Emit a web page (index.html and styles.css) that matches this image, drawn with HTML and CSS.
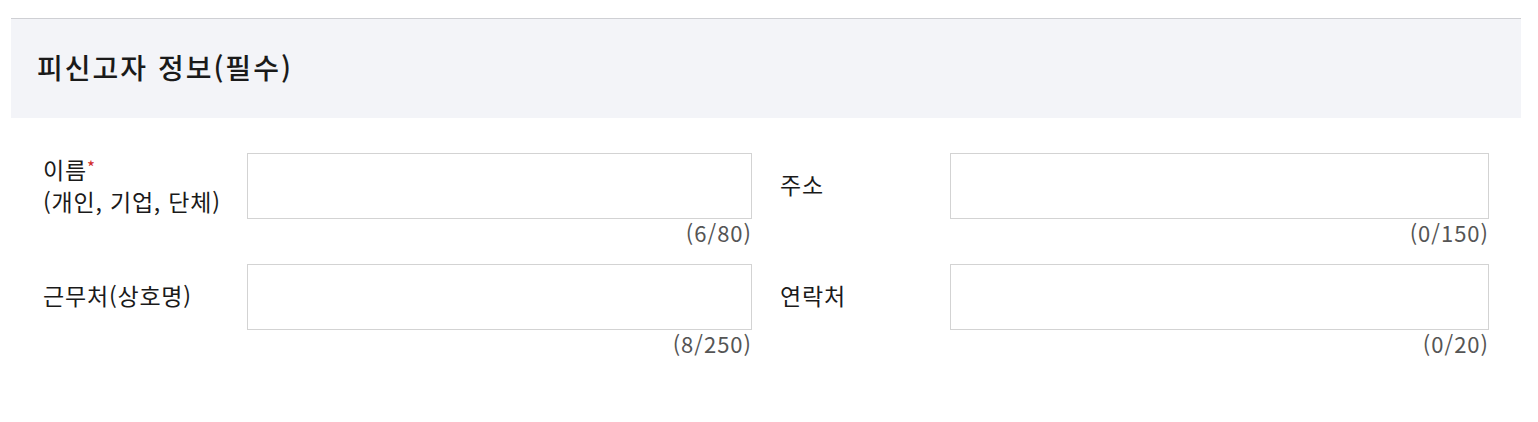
FILE: index.html
```html
<!DOCTYPE html>
<html lang="ko">
<head>
<meta charset="utf-8">
<link rel="stylesheet" href="styles.css">
</head>
<body>
<section class="panel">
  <h2 class="panel-title">피신고자 정보(필수)</h2>
  <div class="form-grid">
    <div class="field field-left">
      <label class="label"><span class="line">이름<span class="req">*</span></span><span class="line">(개인, 기업, 단체)</span></label>
      <div class="control">
        <input class="input" type="text">
        <div class="count">(6/80)</div>
      </div>
    </div>
    <div class="field field-right">
      <label class="label"><span class="line">주소</span></label>
      <div class="control">
        <input class="input" type="text">
        <div class="count">(0/150)</div>
      </div>
    </div>
    <div class="field field-left">
      <label class="label"><span class="line">근무처(상호명)</span></label>
      <div class="control">
        <input class="input" type="text">
        <div class="count">(8/250)</div>
      </div>
    </div>
    <div class="field field-right">
      <label class="label"><span class="line">연락처</span></label>
      <div class="control">
        <input class="input" type="text">
        <div class="count">(0/20)</div>
      </div>
    </div>
  </div>
</section>
</body>
</html>
```

FILE: styles.css
```css
html, body {
  margin: 0;
  padding: 0;
  background: #ffffff;
}
body {
  font-family: "Noto Sans CJK KR", "Noto Sans", sans-serif;
  color: #1a1a1a;
}
.panel {
  margin: 18px 17px 0 11px;
  border-top: 1px solid #cfd0d4;
}
.panel-title {
  margin: 0;
  height: 99px;
  box-sizing: border-box;
  background: #f3f4f8;
  padding: 0 26px 3px;
  display: flex;
  align-items: center;
  font-size: 28px;
  line-height: 1;
  font-weight: 500;
  color: #1a1a1a;
  letter-spacing: 2px;
}
.form-grid {
  display: grid;
  grid-template-columns: 1fr 1fr;
  column-gap: 28px;
  row-gap: 18px;
  padding: 35px 32px 0 32px;
}
.field {
  display: grid;
  align-items: start;
}
.field-left {
  grid-template-columns: 204px 1fr;
}
.field-right {
  grid-template-columns: 170px 1fr;
}
.label {
  font-size: 23px;
  line-height: 32px;
  letter-spacing: 0.8px;
  color: #1a1a1a;
  height: 66px;
  box-sizing: border-box;
  padding-bottom: 5px;
  display: flex;
  flex-direction: column;
  justify-content: center;
}
.line {
  display: block;
  white-space: nowrap;
}
.req {
  color: #d12a2a;
  font-size: 17px;
  vertical-align: 5px;
  letter-spacing: 0;
}
.control {
  display: flex;
  flex-direction: column;
}
.input {
  display: block;
  height: 66px;
  box-sizing: border-box;
  border: 1px solid #d3d3d3;
  background: #ffffff;
  margin: 0;
  padding: 0 12px;
  width: 100%;
  font: inherit;
}
.count {
  text-align: right;
  font-size: 22px;
  line-height: 27px;
  letter-spacing: 1px;
  color: #555555;
}
```
